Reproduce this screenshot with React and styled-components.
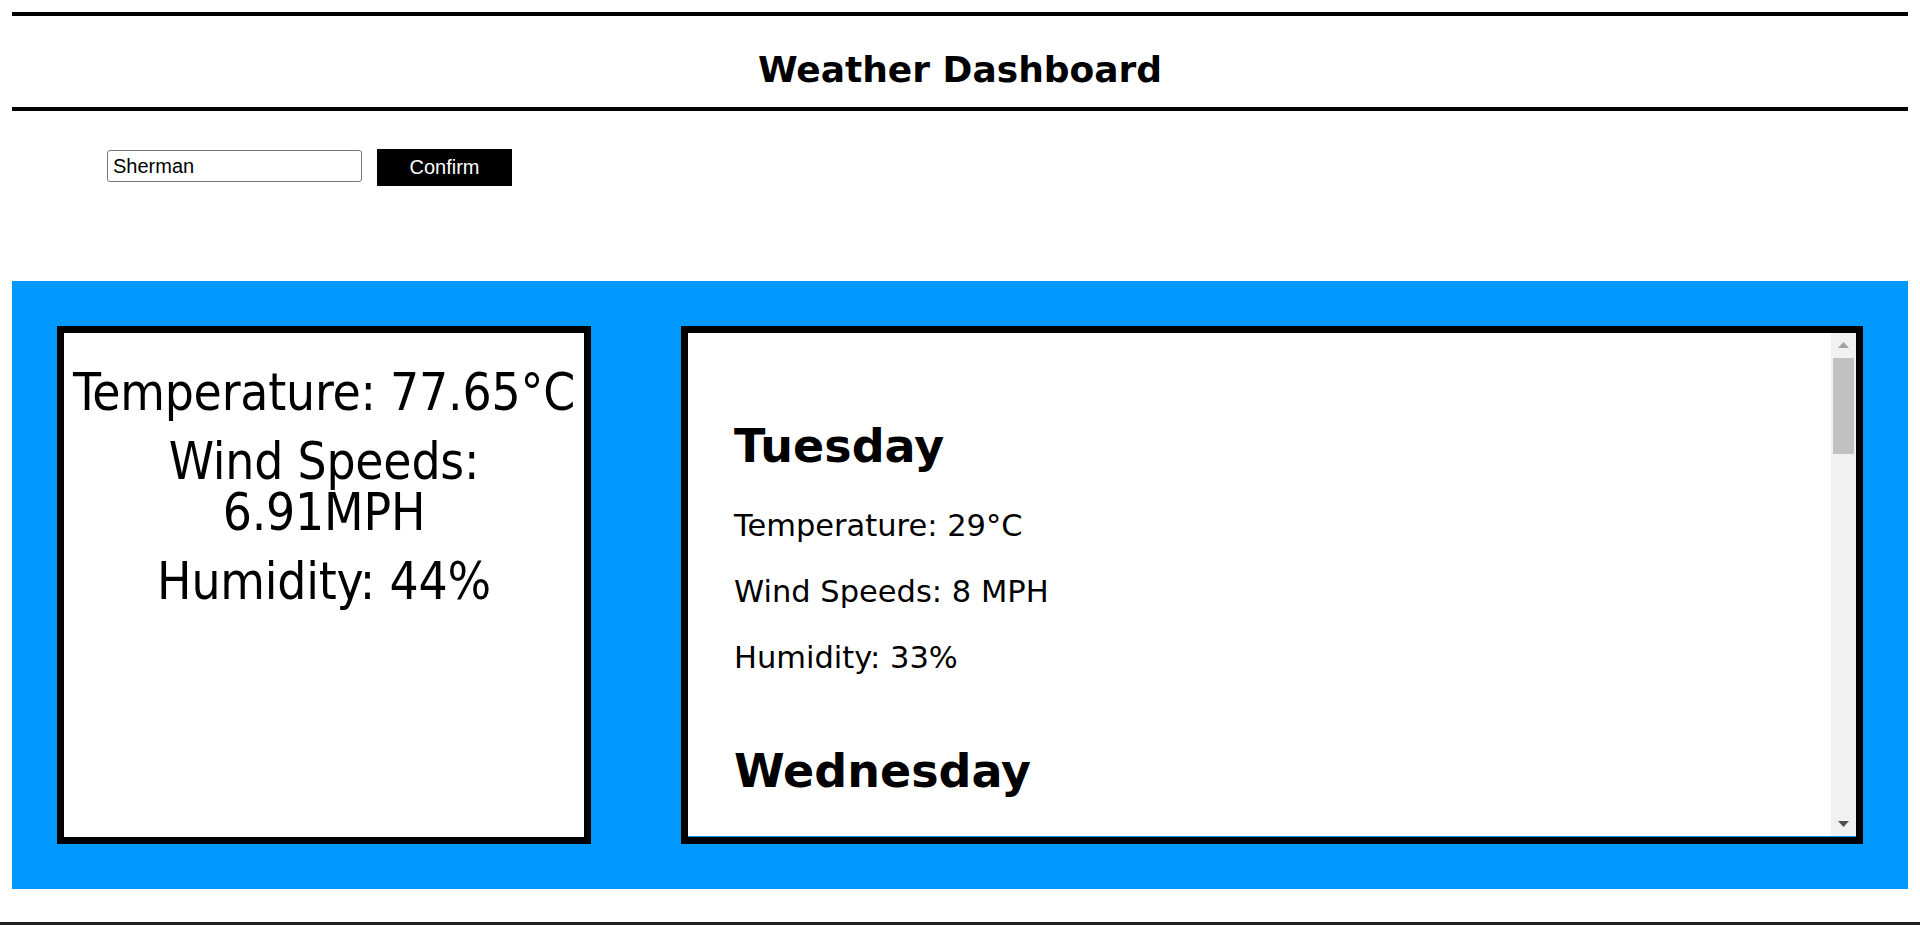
import React from "react";
import styled, { createGlobalStyle } from "styled-components";

const GlobalStyle = createGlobalStyle`
  html, body { margin: 0; padding: 0; background: #fff; }
  body { font-family: "DejaVu Sans", Verdana, sans-serif; color: #000; }
  * { box-sizing: border-box; }
`;

const Page = styled.div`
  padding: 12px 12px 0;
  display: flex;
  flex-direction: column;
`;

const Header = styled.header`
  height: 99px;
  border-top: 4px solid #000;
  border-bottom: 4px solid #000;
  display: flex;
  align-items: center;
  justify-content: center;
  padding-top: 16px;
`;

const Title = styled.h1`
  margin: 0;
  font-family: "DejaVu Sans", Verdana, sans-serif;
  font-weight: bold;
  font-size: 36px;
  line-height: 1.2;
`;

const SearchRow = styled.form`
  display: flex;
  align-items: flex-start;
  gap: 15px;
  padding: 38px 0 0 95px;
  height: 170px;
`;

const CityInput = styled.input`
  width: 255px;
  height: 32px;
  margin-top: 1px;
  border: 1px solid #767676;
  border-radius: 3px;
  padding: 0 5px;
  font-family: "Liberation Sans", Arial, sans-serif;
  font-size: 20px;
  color: #000;
`;

const ConfirmButton = styled.button`
  width: 135px;
  height: 37px;
  border: none;
  background: #000;
  color: #fff;
  font-family: "Liberation Sans", Arial, sans-serif;
  font-size: 20px;
  padding: 0;
`;

const Board = styled.section`
  background: #0099ff;
  padding: 45px;
  display: flex;
  gap: 90px;
  height: 608px;
`;

const CurrentCard = styled.div`
  width: 534px;
  flex: none;
  border: 7px solid #000;
  background: #fff;
  padding-top: 34px;
  text-align: center;
  font-family: "DejaVu Sans Condensed", "DejaVu Sans", Tahoma, sans-serif;
  font-stretch: condensed;
  font-size: 51px;
  line-height: 51px;
  letter-spacing: -0.2px;
`;

const CurrentLine = styled.p`
  margin: 0 0 18px;
`;

const ForecastCard = styled.div`
  flex: 1;
  border: 7px solid #000;
  background: #fff;
  min-width: 0;
`;

const ForecastFrame = styled.div`
  height: 100%;
  display: flex;
  border-bottom: 1px solid #0099ff;
`;

const ForecastScroll = styled.div`
  flex: 1;
  min-width: 0;
  overflow: hidden;
  padding: 87px 46px 0;
`;

const Scrollbar = styled.div`
  width: 25px;
  flex: none;
  background: #f1f1f1;
  display: flex;
  flex-direction: column;
`;

const ScrollArrow = styled.div`
  height: 24px;
  flex: none;
  display: flex;
  align-items: center;
  justify-content: center;
`;

const Thumb = styled.div`
  height: 96px;
  margin: 1px 2px 0;
  background: #c1c1c1;
`;

const Track = styled.div`
  flex: 1;
`;

const Day = styled.div`
  margin-bottom: 70px;
`;

const DayName = styled.h2`
  margin: 0 0 37px;
  font-family: "DejaVu Sans", Verdana, sans-serif;
  font-weight: bold;
  font-size: 46px;
  line-height: 52px;
`;

const DayStat = styled.p`
  margin: 0 0 32px;
  font-size: 30.5px;
  line-height: 34px;
  white-space: nowrap;
  &:last-child { margin-bottom: 0; }
`;

const Footer = styled.footer`
  margin-top: 33px;
  margin-left: -12px;
  margin-right: -12px;
  border-top: 4px solid #222;
  height: 40px;
`;

const forecast = [
  { day: "Tuesday", stats: ["Temperature: 29°C", "Wind Speeds: 8 MPH", "Humidity: 33%"] },
  { day: "Wednesday", stats: [] },
];

const Arrow = ({ up }) => (
  <svg width="11" height="6" viewBox="0 0 11 6">
    <polygon
      points={up ? "0,6 11,6 5.5,0" : "0,0 11,0 5.5,6"}
      fill={up ? "#a3a3a3" : "#505050"}
    />
  </svg>
);

export default function App() {
  return (
    <>
      <GlobalStyle />
      <Page>
        <Header>
          <Title>Weather Dashboard</Title>
        </Header>
        <SearchRow onSubmit={(e) => e.preventDefault()}>
          <CityInput type="text" defaultValue="Sherman" />
          <ConfirmButton type="submit">Confirm</ConfirmButton>
        </SearchRow>
        <Board>
          <CurrentCard>
            <CurrentLine>Temperature: 77.65°C</CurrentLine>
            <CurrentLine>Wind Speeds: 6.91MPH</CurrentLine>
            <CurrentLine>Humidity: 44%</CurrentLine>
          </CurrentCard>
          <ForecastCard>
            <ForecastFrame>
              <ForecastScroll>
                {forecast.map((f) => (
                  <Day key={f.day}>
                    <DayName>{f.day}</DayName>
                    {f.stats.map((s) => (
                      <DayStat key={s}>{s}</DayStat>
                    ))}
                  </Day>
                ))}
              </ForecastScroll>
              <Scrollbar>
                <ScrollArrow>
                  <Arrow up />
                </ScrollArrow>
                <Thumb />
                <Track />
                <ScrollArrow>
                  <Arrow />
                </ScrollArrow>
              </Scrollbar>
            </ForecastFrame>
          </ForecastCard>
        </Board>
        <Footer />
      </Page>
    </>
  );
}
